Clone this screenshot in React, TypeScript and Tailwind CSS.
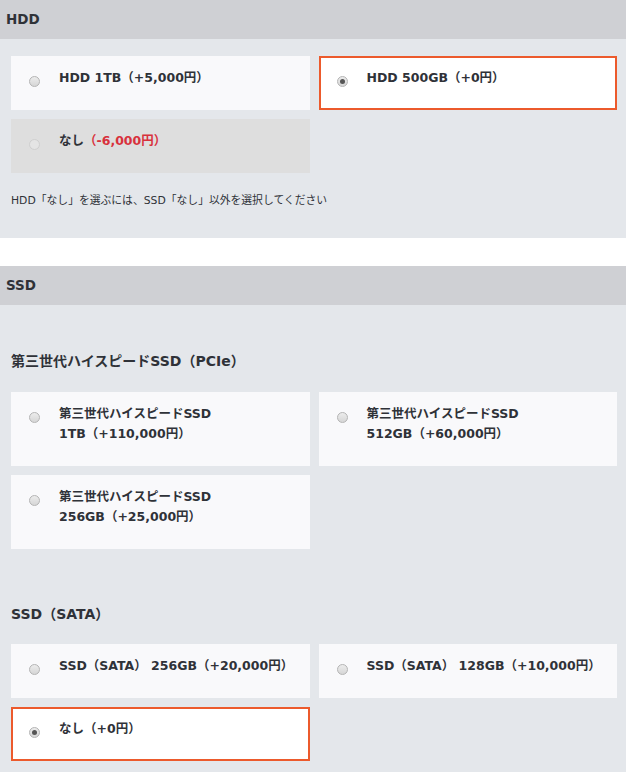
import React from 'react';

type Option = {
  id: string;
  lines: React.ReactNode[];
  checked?: boolean;
  disabled?: boolean;
};

function Radio({ checked, disabled }: { checked?: boolean; disabled?: boolean }) {
  return (
    <span
      className={`mt-[8px] flex h-[11px] w-[11px] shrink-0 items-center justify-center rounded-full border ${
        disabled ? 'border-[#cfcfcf] bg-[#e4e4e4]' : 'border-[#b4b4b4] bg-gradient-to-b from-[#ececec] to-[#d6d6d6]'
      }`}
    >
      {checked && <span className="h-[5px] w-[5px] rounded-full bg-[#555]" />}
    </span>
  );
}

function OptionCard({ opt }: { opt: Option }) {
  const cls = opt.checked
    ? 'border-[#ec5a2c] bg-white'
    : opt.disabled
    ? 'border-transparent bg-[#dedede]'
    : 'border-transparent bg-[#f9f9fb]';
  return (
    <label className={`flex gap-[19px] border-2 pl-[16px] pr-3 pt-[10px] pb-[20px] ${cls}`}>
      <Radio checked={opt.checked} disabled={opt.disabled} />
      <div className="text-[12.5px] font-bold leading-[20px] text-[#2f3238]">
        {opt.lines.map((l, i) => (
          <div key={i}>{l}</div>
        ))}
      </div>
    </label>
  );
}

function Header({ title }: { title: string }) {
  return (
    <div className="flex h-[39px] items-center bg-[#cfd0d4] pl-[6px] text-[13.5px] font-bold text-[#2f3238]">
      {title}
    </div>
  );
}

const hdd: Option[] = [
  { id: 'h1', lines: ['HDD 1TB（+5,000円）'] },
  { id: 'h2', lines: ['HDD 500GB（+0円）'], checked: true },
  {
    id: 'h3',
    lines: [
      <>
        なし<span className="text-[#d8313c]">（-6,000円）</span>
      </>,
    ],
    disabled: true,
  },
];

const pcie: Option[] = [
  { id: 'p1', lines: ['第三世代ハイスピードSSD', '1TB（+110,000円）'] },
  { id: 'p2', lines: ['第三世代ハイスピードSSD', '512GB（+60,000円）'] },
  { id: 'p3', lines: ['第三世代ハイスピードSSD', '256GB（+25,000円）'] },
];

const sata: Option[] = [
  { id: 's1', lines: ['SSD（SATA） 256GB（+20,000円）'] },
  { id: 's2', lines: ['SSD（SATA） 128GB（+10,000円）'] },
  { id: 's3', lines: ['なし（+0円）'], checked: true },
];

export default function App() {
  return (
    <div
      className="min-h-[772px] bg-white text-[#2f3238]"
      style={{ fontFamily: '"DejaVu Sans", "Noto Sans CJK JP", sans-serif' }}
    >
      {/* HDD */}
      <Header title="HDD" />
      <div className="bg-[#e4e7eb] pl-[11px] pr-[9px] pt-[17px] pb-[30px]">
        <div className="grid grid-cols-2 gap-[9px]">
          {hdd.map((o) => (
            <OptionCard key={o.id} opt={o} />
          ))}
        </div>
        <p className="mt-[21px] text-[10.8px] leading-[14px]">
          HDD「なし」を選ぶには、SSD「なし」以外を選択してください
        </p>
      </div>

      <div className="h-[28px] bg-white" />

      {/* SSD */}
      <Header title="SSD" />
      <div className="bg-[#e4e7eb] pl-[11px] pr-[9px] pt-[46px] pb-[12px]">
        <h3 className="text-[14px] font-bold leading-[20px]">第三世代ハイスピードSSD（PCIe）</h3>
        <div className="mt-[21px] grid grid-cols-2 gap-[9px]">
          {pcie.map((o) => (
            <OptionCard key={o.id} opt={o} />
          ))}
        </div>
        <h3 className="mt-[55px] text-[14px] font-bold leading-[20px]">SSD（SATA）</h3>
        <div className="mt-[20px] grid grid-cols-2 gap-[9px]">
          {sata.map((o) => (
            <OptionCard key={o.id} opt={o} />
          ))}
        </div>
      </div>
    </div>
  );
}
